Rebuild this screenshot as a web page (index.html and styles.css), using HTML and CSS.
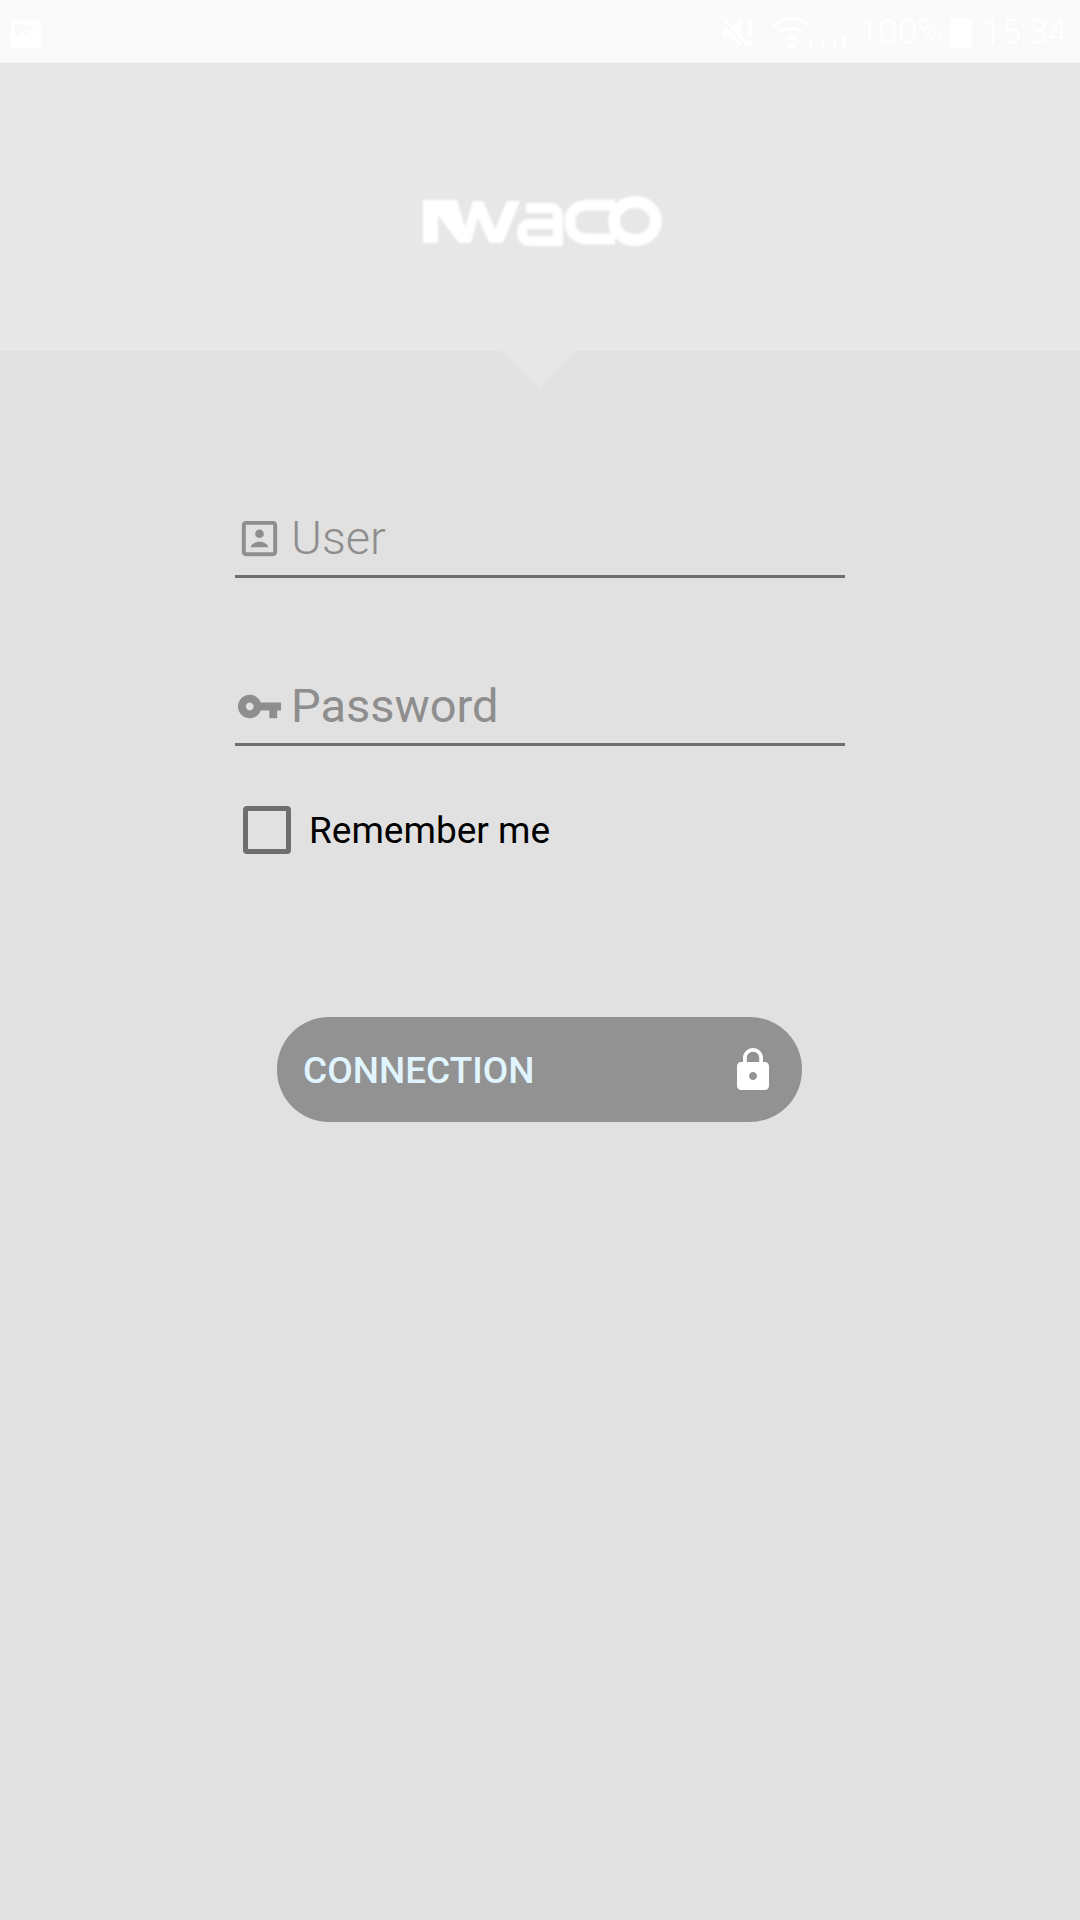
FILE: index.html
```html
<!DOCTYPE html>
<html lang="en">
<head>
    <meta charset="UTF-8">
    <meta name="viewport" content="width=device-width, initial-scale=1.0">
    <title>Login</title>
    <link rel="stylesheet" href="styles.css">
</head>
<body>
    <!-- status bar -->
    <div class="status-bar">
        <svg class="status-pic" viewBox="0 0 32 32"><path d="M0 2h32v30H0z M4 6v14l8-6 4 4 10-10z" fill-rule="evenodd"/></svg>
        <div class="status-right">
            <svg class="status-mute" viewBox="0 0 34 32"><path d="M2 11h7l11-9v28L9 21H2z"/><path d="M2 4l22 24" stroke="#fafafa" stroke-width="3"/><path d="M2 1l25 27" stroke="#fff" stroke-width="3"/><path d="M27 3h4v15h-4zM27 23h4v5h-4z"/></svg>
            <svg class="status-wifi" viewBox="0 0 77 32"><path d="M2 9C13-1 28-1 39 9M9 16c7-6 16-6 23 0M15 23c4-3 7-3 11 0" fill="none" stroke="#fff" stroke-width="3"/><path d="M20 25l5 4-5 3-5-3zM38 24h3v6h-3zM50 25h3v6h-3zM62 21h3v10h-3zM72 18h3v13h-3z"/></svg>
            <span class="status-text">100%</span>
            <div class="status-battery"></div>
            <span class="status-text">15:34</span>
        </div>
    </div>

    <!-- logo -->
    <header class="brand">
        <svg class="brand-logo" viewBox="0 0 250 60" role="img" aria-label="Iwaco">
            <path fill="#fff" d="M8 9H42L50 36 58 10H68L80 38 92 10H105L88 52H74L63 27 56 52H44L23 24V52H8z"/>
            <g fill="none" stroke="#fff">
                <path stroke-width="10" d="M111 17H135Q143 17 143 26V50H115Q107 50 107 41.500Q107 33 115 33H143"/>
                <path stroke-width="11" d="M200 14H175Q155 14 155 31Q155 48 175 48H200"/>
                <ellipse stroke-width="12" cx="220" cy="30" rx="21" ry="19"/>
            </g>
        </svg>
    </header>

    <main class="login">
        <div class="field">
            <svg class="field-icon" viewBox="0 0 24 24"><path d="M19 5v14H5V5h14m0-2H5c-1.100 0-2 .9-2 2v14c0 1.100.9 2 2 2h14c1.100 0 2-.9 2-2V5c0-1.100-.9-2-2-2z"/><circle cx="12" cy="9.600" r="2.200"/><path d="M7.500 16.500c0-1.800 3-2.800 4.500-2.800s4.500 1 4.500 2.800z"/></svg>
            <span class="field-text field-text-light">User</span>
        </div>
        <div class="field field-pass">
            <svg class="field-icon" viewBox="0 0 24 24"><path d="M12.650 10C11.830 7.670 9.610 6 7 6c-3.310 0-6 2.690-6 6s2.690 6 6 6c2.610 0 4.830-1.670 5.650-4H17v4h4v-4h2v-4H12.650zM7 14c-1.100 0-2-.9-2-2s.9-2 2-2 2 .9 2 2-.9 2-2 2z"/></svg>
            <span class="field-text">Password</span>
        </div>
        <label class="remember">
            <span class="remember-box"></span>
            <span class="remember-text">Remember me</span>
        </label>
        <button class="connect-btn">
            <span class="connect-text">CONNECTION</span>
            <svg class="connect-lock" viewBox="0 0 24 24"><path d="M18 8h-1V6c0-2.760-2.240-5-5-5S7 3.240 7 6v2H6c-1.100 0-2 .9-2 2v10c0 1.100.9 2 2 2h12c1.100 0 2-.9 2-2V10c0-1.100-.9-2-2-2zm-6 9c-1.100 0-2-.9-2-2s.9-2 2-2 2 .9 2 2-.9 2-2 2zm3.100-9H8.900V6c0-1.710 1.390-3.100 3.100-3.100 1.710 0 3.100 1.390 3.100 3.100v2z"/></svg>
        </button>
    </main>
</body>
</html>
```
FILE: styles.css
```css
* {
    margin: 0;
    padding: 0;
    box-sizing: border-box;
    font-family: 'Roboto', sans-serif;
}

body {
    background-color: #e1e1e1;
    height: 1920px;
    overflow: hidden;
}

/* status bar */
.status-bar {
    height: 63px;
    background: #fafafa;
    border-bottom: 1px solid #f2f2f2;
    padding: 3px 13px 0 10px;
    display: flex;
    align-items: center;
    justify-content: space-between;
}

.status-pic {
    width: 32px;
    height: 30px;
    fill: #fff;
    filter: blur(0.7px);
}

.status-right {
    display: flex;
    align-items: center;
    color: #fff;
    filter: blur(0.7px);
}

.status-mute {
    width: 34px;
    height: 32px;
    fill: #fff;
    margin-right: 16px;
}

.status-wifi {
    width: 77px;
    height: 32px;
    fill: #fff;
    margin-right: 11px;
}

.status-text {
    font-size: 35px;
    font-weight: 300;
    color: #fff;
}

.status-battery {
    width: 22px;
    height: 31px;
    background: #fff;
    margin: -1px 10px 0 7px;
    clip-path: polygon(30% 0, 70% 0, 70% 8%, 100% 8%, 100% 100%, 0 100%, 0 8%, 30% 8%);
}

/* logo area */
.brand {
    position: relative;
    height: 288px;
    background: #e7e7e7;
    display: flex;
    justify-content: center;
    padding: 128px 0 0 0;
}

.brand::after {
    content: "";
    position: absolute;
    left: 502px;
    top: 288px;
    width: 74px;
    height: 37px;
    background: #e7e7e7;
    clip-path: polygon(0 0, 100% 0, 50% 100%);
}

.brand-logo {
    width: 250px;
    height: 60px;
    filter: blur(0.8px);
}

/* form */
.login {
    width: 610px;
    margin: 0 auto;
    padding-top: 146px;
}

.field {
    height: 81px;
    padding: 4px 0 0 1px;
    border-bottom: 3px solid #6e6e6e;
    display: flex;
    align-items: center;
    gap: 8px;
}

.field-pass {
    margin-top: 87px;
}

.field-icon {
    width: 47px;
    height: 47px;
    fill: #8e8e8e;
    flex-shrink: 0;
}

.field-text {
    font-size: 47px;
    color: #8e8e8e;
    margin-top: -2px;
}

.field-text-light {
    font-weight: 300;
}

.remember {
    display: flex;
    align-items: center;
    gap: 18px;
    margin: 60px 0 0 8px;
}

.remember-box {
    width: 48px;
    height: 48px;
    border: 5px solid #6e6e6e;
    border-radius: 4px;
}

.remember-text {
    font-size: 37px;
    color: #000;
}

.connect-btn {
    width: 525px;
    height: 105px;
    margin: 163px 0 0 42px;
    padding: 0 25px 0 26px;
    border: none;
    border-radius: 52px;
    background: #929292;
    color: #e0f5ff;
    font-size: 37px;
    font-weight: 500;
    display: flex;
    align-items: center;
    justify-content: space-between;
}

.connect-text {
    margin-top: 2px;
}

.connect-lock {
    width: 48px;
    height: 48px;
    fill: #fff;
}
```
